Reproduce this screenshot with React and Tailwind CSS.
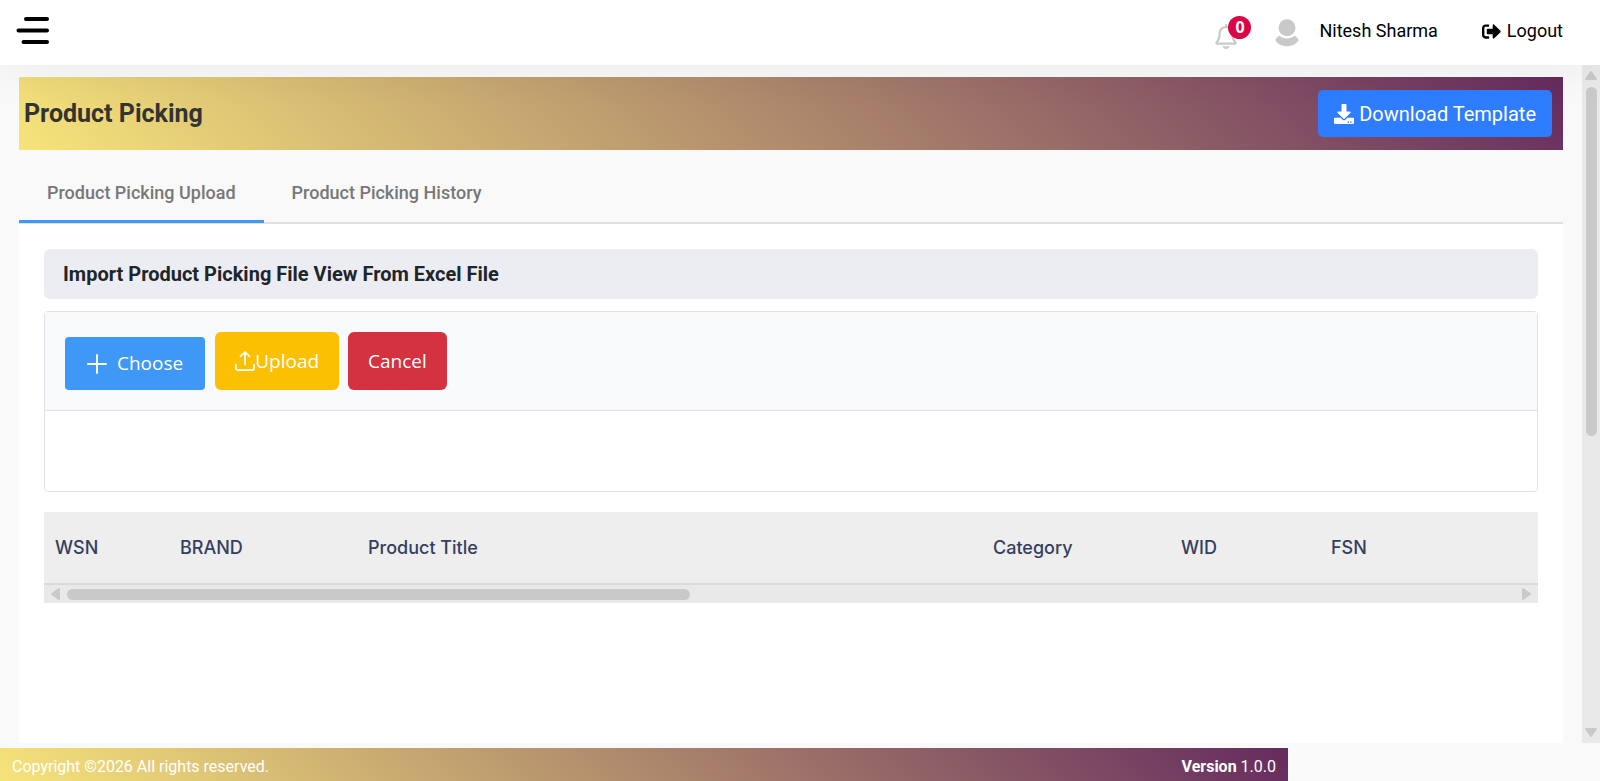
import { useState } from "react";
import { FaDownload, FaSignOutAlt } from "react-icons/fa";

const tabs = ["Product Picking Upload", "Product Picking History"];

const columns = [
	{ title: "WSN", width: "w-[125px]" },
	{ title: "BRAND", width: "w-[188px]" },
	{ title: "Product Title", width: "w-[625px]" },
	{ title: "Category", width: "w-[188px]" },
	{ title: "WID", width: "w-[150px]" },
	{ title: "FSN", width: "" },
];

function MenuIcon() {
	return (
		<svg width="34" height="30" viewBox="0 0 34 30" stroke="#000" strokeWidth="4" strokeLinecap="round">
			<path d="M10 3H31M2.500 14.500H31M7.500 26H31" />
		</svg>
	);
}

function BellIcon() {
	return (
		<svg width="22" height="26" viewBox="0 0 22 26" fill="none">
			<path
				d="M11 3C6.800 3 4.600 6 4.600 9.800C4.600 15 3.300 16.800 1.500 18.600V19.600H20.500V18.600C18.700 16.800 17.400 15 17.400 9.800C17.400 6 15.200 3 11 3Z"
				stroke="#c9c9c9"
				strokeWidth="2.200"
				strokeLinejoin="round"
			/>
			<path d="M11 1V3" stroke="#c9c9c9" strokeWidth="2" strokeLinecap="round" />
			<path d="M7.500 22.300H14.500C14 24 12.800 25 11 25S8 24 7.500 22.300Z" fill="#c9c9c9" />
		</svg>
	);
}

function UserIcon() {
	return (
		<svg width="24" height="28" viewBox="0 0 24 28" fill="#c9c9c9">
			<circle cx="12" cy="8.700" r="8.500" />
			<path d="M4.600 16.800C8.500 20.400 15.500 20.400 19.400 16.800C21.600 17.800 23 19.400 23.700 21.300C21.500 25 17 27.300 12 27.300S2.500 25 0.300 21.300C1 19.400 2.400 17.800 4.600 16.800Z" />
		</svg>
	);
}

function PlusIcon() {
	return (
		<svg width="20" height="20" viewBox="0 0 20 20" stroke="#fff" strokeWidth="1.900" strokeLinecap="round">
			<path d="M10 1V19M1 10H19" />
		</svg>
	);
}

function UploadIcon() {
	return (
		<svg
			width="20"
			height="20"
			viewBox="0 0 20 20"
			fill="none"
			stroke="#fff"
			strokeWidth="1.700"
			strokeLinecap="round"
			strokeLinejoin="round"
		>
			<path d="M10 13.500V1M5.500 5.300L10 1L14.500 5.300" />
			<path d="M0.900 13.500V17.500C0.900 18.500 1.500 19.100 2.500 19.100H17.500C18.500 19.100 19.100 18.500 19.100 17.500V13.500" />
		</svg>
	);
}

function Arrow({ points }) {
	return (
		<svg width="12" height="12" viewBox="0 0 12 12" fill="#c9c9c9" stroke="#c9c9c9" strokeWidth="2" strokeLinejoin="round">
			<polygon points={points} />
		</svg>
	);
}

export default function App() {
	const [activeTab, setActiveTab] = useState(0);

	return (
		<div className="flex h-screen flex-col bg-[#f9f9f9] font-['Roboto',sans-serif] text-black">
			<header className="relative z-10 flex h-[65px] shrink-0 items-center justify-between bg-white pr-[37px] pl-4 shadow-[0_0_50px_rgba(0,0,0,0.07)]">
				<button aria-label="Toggle menu" className="pb-1">
					<MenuIcon />
				</button>
				<div className="flex items-center text-lg">
					<button aria-label="Notifications" className="relative mr-[38px] pt-2">
						<BellIcon />
						<span className="absolute top-0 left-[13px] flex size-[23px] items-center justify-center rounded-full bg-[#dc0546] font-['Open_Sans',sans-serif] text-base font-bold text-white">
							0
						</span>
					</button>
					<UserIcon />
					<span className="ml-5 pb-[3px]">Nitesh Sharma</span>
					<a href="#logout" className="ml-11 flex items-center gap-[6px] pb-[3px]">
						<FaSignOutAlt size={19} />
						Logout
					</a>
				</div>
			</header>

			<div className="flex min-h-0 flex-1">
				<main className="flex min-w-0 flex-1 flex-col px-[19px] pt-3">
					<div className="flex items-center justify-between bg-[linear-gradient(45deg,#f6e47a,#652b5e)] py-[13px] pr-[11px] pl-[5px]">
						<h1 className="text-[25px] font-bold text-[#333]">Product Picking</h1>
						<button className="flex h-[47px] items-center gap-[5px] rounded-[5px] bg-[#2f7dff] px-4 text-xl text-white">
							<FaDownload size={20} />
							Download Template
						</button>
					</div>

					<div className="flex h-[74px] shrink-0 border-b-2 border-[#dee0e2]">
						{tabs.map((tab, index) => (
							<button
								key={tab}
								className={
									index === activeTab
										? "-mb-px border-b-[3px] border-[#3f97f6] px-7 pt-4 text-lg font-medium text-[#777]"
										: "-mb-px border-b-[3px] border-transparent px-7 pt-4 text-lg font-medium text-[#777]"
								}
								onClick={() => setActiveTab(index)}
							>
								{tab}
							</button>
						))}
					</div>

					<section className="min-h-0 flex-1 bg-white px-[25px] pt-[25px]">
						<h2 className="rounded-md bg-[#ebedf2] px-[19px] py-[11px] text-xl font-bold text-[#212529]">
							Import Product Picking File View From Excel File
						</h2>

						<div className="mt-3 rounded border border-[#dee2e6] font-['Open_Sans',sans-serif] text-[19px] text-white">
							<div className="flex items-end border-b border-[#dee2e6] bg-[#f8f9fb] p-5">
								<button className="mr-[10px] flex h-[53px] items-center gap-[10px] rounded bg-[#3f97f6] px-[22px]">
									<PlusIcon />
									Choose
								</button>
								<button className="mr-[9px] flex h-[58px] items-center rounded-md bg-[#fbc002] px-5">
									<UploadIcon />
									Upload
								</button>
								<button className="h-[58px] rounded-md bg-[#d43141] px-5">Cancel</button>
							</div>
							<div className="h-20 rounded-b bg-white" />
						</div>

						<div className="mt-5 overflow-hidden bg-[#eee]">
							<table className="w-full table-fixed border-b-2 border-[#d9d9d9]">
								<thead>
									<tr className="h-[72px] text-left font-['Inter',sans-serif] text-lg text-[#343f5f]">
										{columns.map((column) => (
											<th key={column.title} className={`${column.width} px-[11px] font-medium`}>
												{column.title}
											</th>
										))}
									</tr>
								</thead>
							</table>
							<div className="flex h-[18px] items-center gap-[6px] bg-[#e9e9e9] px-[5px]">
								<Arrow points="10,1 10,11 3,6" />
								<div className="flex-1">
									<div className="h-[11px] w-[43%] rounded-full bg-[#c9c9c9]" />
								</div>
								<Arrow points="2,1 2,11 9,6" />
							</div>
						</div>
					</section>
				</main>

				<div className="flex w-[18px] shrink-0 flex-col items-center gap-[6px] bg-[#e9e9e9] py-1">
					<Arrow points="1,10 11,10 6,3" />
					<div className="flex-1">
						<div className="h-[55%] w-[11px] rounded-full bg-[#c9c9c9]" />
					</div>
					<Arrow points="1,2 11,2 6,9" />
				</div>
			</div>

			<footer className="mt-[5px] flex h-[33px] w-[calc(100%-312px)] shrink-0 items-center justify-between bg-[linear-gradient(45deg,#f6e47a,#652b5e)] px-3 pt-1 text-base text-white">
				<span>Copyright ©2026 All rights reserved.</span>
				<span>
					<b>Version</b> 1.0.0
				</span>
			</footer>
		</div>
	);
}
